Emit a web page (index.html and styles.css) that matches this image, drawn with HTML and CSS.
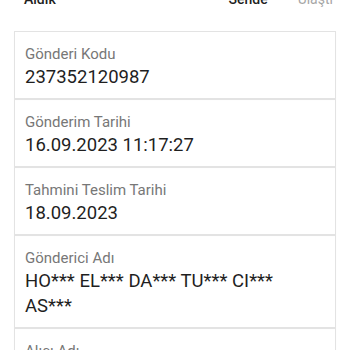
FILE: index.html
```html
<!DOCTYPE html>
<html lang="tr">
<head>
<meta charset="utf-8">
<link rel="stylesheet" href="styles.css">
</head>
<body>
<div class="steps">
  <span class="step done">Aldık</span>
  <span class="spacer"></span>
  <span class="step done">Sende</span>
  <span class="step todo">Ulaştı</span>
</div>
<div class="list">
  <div class="card">
    <div class="label">Gönderi Kodu</div>
    <div class="value">237352120987</div>
  </div>
  <div class="card">
    <div class="label">Gönderim Tarihi</div>
    <div class="value">16.09.2023 11:17:27</div>
  </div>
  <div class="card">
    <div class="label">Tahmini Teslim Tarihi</div>
    <div class="value">18.09.2023</div>
  </div>
  <div class="card">
    <div class="label">Gönderici Adı</div>
    <div class="value">HO*** EL*** DA*** TU*** CI***<br>AS***</div>
  </div>
  <div class="card">
    <div class="label">Alıcı Adı</div>
    <div class="value">AB*** CD***</div>
  </div>
</div>
</body>
</html>
```

FILE: styles.css
```css
html, body {
  margin: 0;
  padding: 0;
  background: #ffffff;
  font-family: Roboto, "Noto Sans", sans-serif;
  overflow: hidden;
}
.steps {
  display: flex;
  align-items: flex-start;
  margin-top: -9px;
  padding: 0 17px 0 24px;
  font-size: 14px;
  line-height: 16px;
  height: 16px;
}
.spacer { flex: 1; }
.step.done { color: #212121; font-weight: 500; }
.step.todo { color: #a6a6a6; margin-left: 30px; }
.list {
  margin: 24px 14px 0 14px;
}
.card {
  border: 1px solid #e3e3e3;
  padding: 12px 10px 8px 10px;
  box-shadow: 0 1px 1px rgba(0,0,0,0.04);
}
.label {
  font-size: 15px;
  line-height: 21px;
  color: #777777;
}
.value {
  font-size: 18.5px;
  line-height: 25px;
  color: #1f1f1f;
}
```
